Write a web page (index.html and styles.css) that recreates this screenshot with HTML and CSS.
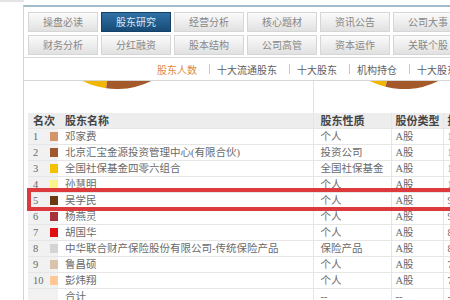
FILE: index.html
```html
<!DOCTYPE html>
<html lang="zh-CN">
<head>
    <meta charset="UTF-8">
    <title>股东研究</title>
    <link rel="stylesheet" href="styles.css">
</head>
<body>

    <div class="top-strip"></div>

    <div class="frame">
        <!-- Main tabs -->
        <div class="tabs">
            <div class="tab-row">
                <a class="tab">操盘必读</a>
                <a class="tab active">股东研究</a>
                <a class="tab">经营分析</a>
                <a class="tab">核心题材</a>
                <a class="tab">资讯公告</a>
                <a class="tab">公司大事</a>
            </div>
            <div class="tab-row">
                <a class="tab">财务分析</a>
                <a class="tab">分红融资</a>
                <a class="tab">股本结构</a>
                <a class="tab">公司高管</a>
                <a class="tab">资本运作</a>
                <a class="tab">关联个股</a>
            </div>
        </div>

        <div class="panel">
            <!-- Sub navigation -->
            <div class="subnav">
                <a class="current">股东人数</a>
                <span class="sep"></span>
                <a>十大流通股东</a>
                <span class="sep"></span>
                <a>十大股东</a>
                <span class="sep"></span>
                <a>机构持仓</a>
                <span class="sep"></span>
                <a>十大股东变动</a>
            </div>

            <!-- Pie charts (only the bottom is visible) -->
            <div class="charts">
                <div class="chart-half left">
                    <svg class="pie" width="72" height="8" viewBox="0 0 72 8">
                        <path d="M1.6 0 A78 78 0 0 0 25.1 7.2 L26.1 0 Z" fill="#f2b705"/>
                        <path d="M26.1 0 L25.1 7.2 A78 78 0 0 0 70.4 0 Z" fill="#a3592a"/>
                    </svg>
                </div>
                <div class="chart-half right">
                    <svg class="pie" width="72" height="8" viewBox="0 0 72 8">
                        <path d="M1.6 0 A78 78 0 0 0 17.5 5.8 L18.9 0 Z" fill="#f2b705"/>
                        <path d="M18.9 0 L17.5 5.8 A78 78 0 0 0 70.4 0 Z" fill="#a3592a"/>
                    </svg>
                </div>
            </div>

            <!-- Holder table -->
            <div class="table-wrap">
                <table class="holders">
                    <colgroup>
                        <col style="width:17px">
                        <col style="width:13px">
                        <col style="width:255px">
                        <col style="width:78px">
                        <col style="width:52px">
                        <col style="width:87px">
                    </colgroup>
                    <thead>
                        <tr>
                            <th colspan="2" class="c-rank">名次</th>
                            <th class="c-name">股东名称</th>
                            <th class="c-kind">股东性质</th>
                            <th class="c-type">股份类型</th>
                            <th class="c-num">持股数(股)</th>
                        </tr>
                    </thead>
                    <tbody id="holderRows"></tbody>
                </table>
                <div class="highlight"></div>
            </div>
        </div>
    </div>

    <script>
        // Top ten holders
        const holders = [
            ["邓家费", "个人", "#d4956a", "1,806,200"],
            ["北京汇宝金源投资管理中心(有限合伙)", "投资公司", "#a0582e", "1,536,000"],
            ["全国社保基金四零六组合", "全国社保基金", "#f2c200", "1,200,000"],
            ["孙慧明", "个人", "#fbf58a", "1,080,000"],
            ["吴学民", "个人", "#6b3a12", "960,000"],
            ["杨燕灵", "个人", "#a8323a", "900,000"],
            ["胡国华", "个人", "#e01010", "870,000"],
            ["中华联合财产保险股份有限公司-传统保险产品", "保险产品", "#d4d4d4", "800,000"],
            ["鲁昌硕", "个人", "#d9c3aa", "750,000"],
            ["彭炜翔", "个人", "#ffc896", "700,000"]
        ];

        let html = "";
        holders.forEach(function (h, i) {
            html += '<tr>' +
                '<td class="c-rank">' + (i + 1) + '</td>' +
                '<td class="c-color"><span class="swatch" style="background:' + h[2] + '"></span></td>' +
                '<td class="c-name">' + h[0] + '</td>' +
                '<td class="c-kind">' + h[1] + '</td>' +
                '<td class="c-type">A股</td>' +
                '<td class="c-num">' + h[3] + '</td>' +
                '</tr>';
        });
        html += '<tr><td class="c-rank"></td><td class="c-color"></td>' +
            '<td class="c-name">合计</td><td class="c-kind">--</td><td class="c-type">--</td><td class="c-num">--</td></tr>';
        document.getElementById("holderRows").innerHTML = html;
    </script>

</body>
</html>
```

FILE: styles.css
```css
body {
    margin: 0;
    padding: 0;
    background-color: #ffffff;
    font-family: "Noto Sans CJK SC", sans-serif;
    overflow: hidden;
}

.top-strip {
    width: 24px;
    height: 2px;
    background-color: #e4e4e4;
}

.frame {
    margin: 3px 0 0 23px;
    width: 540px;
    border-top: 2px solid #a3bccc;
    border-left: 1px solid #cbd5dc;
}

/* Tabs */
.tabs {
    display: flex;
    flex-direction: column;
    gap: 3px;
    padding: 5px 0 2px 4px;
}

.tab-row {
    display: flex;
    gap: 3px;
}

.tab {
    box-sizing: border-box;
    width: 70px;
    height: 20px;
    line-height: 18px;
    text-align: center;
    font-size: 10px;
    color: #888888;
    background: linear-gradient(#fbfbfb, #e1e1e1);
    border: 1px solid #d6d6d6;
}

.tab.active {
    color: #dce8f3;
    background: linear-gradient(#2f71a5, #184b77);
    border-color: #143f66;
}

/* Panel */
.panel {
    border-top: 1px solid #dadada;
}

.subnav {
    display: flex;
    align-items: center;
    height: 22px;
    padding-left: 133px;
    border-bottom: 1px solid #d6d6d6;
    font-size: 10px;
    color: #5e5e5e;
    white-space: nowrap;
}

.subnav .current {
    color: #e08a3e;
}

.subnav .sep {
    width: 1px;
    height: 10px;
    background-color: #c8c8c8;
    margin: 0 7px 0 12px;
}

.charts {
    display: flex;
    height: 32px;
}

.chart-half.left {
    width: 289px;
    border-right: 1px solid #e2e2e2;
}

.pie {
    display: block;
}

.chart-half.left .pie {
    margin-left: 57px;
}

.chart-half.right .pie {
    margin-left: 54px;
}

/* Table */
.table-wrap {
    position: relative;
    margin-left: 4px;
}

.holders {
    border-collapse: collapse;
    table-layout: fixed;
    width: 502px;
    font-size: 10.5px;
    color: #6a6a6a;
    font-family: "Liberation Serif", "Noto Sans CJK SC", serif;
}

.holders th,
.holders td {
    height: 15px;
    line-height: 15px;
    padding: 0;
    text-align: left;
    white-space: nowrap;
    overflow: hidden;
    border-bottom: 1px solid #e6e6e6;
}

.holders th {
    background-color: #ededed;
    color: #444444;
    font-size: 11px;
    font-weight: bold;
    font-family: "Noto Sans CJK SC", sans-serif;
}

.holders td.c-rank,
.holders td.c-color {
    background-color: #f1f1f1;
}

.holders .c-rank {
    padding-left: 5px;
}

.holders .c-color {
    padding-left: 5px;
}

.holders .c-name {
    padding-left: 7px;
}

.holders .c-kind {
    padding-left: 7px;
    border-left: 1px solid #e6e6e6;
}

.holders .c-type {
    padding-left: 4px;
    border-left: 1px solid #e6e6e6;
}

.holders .c-num {
    padding-left: 4px;
    border-left: 1px solid #e6e6e6;
}

.swatch {
    display: inline-block;
    width: 8px;
    height: 9px;
    vertical-align: -1px;
}

/* Red marker drawn over row 5 */
.highlight {
    position: absolute;
    left: -1px;
    top: 75px;
    width: 490px;
    height: 23px;
    box-sizing: border-box;
    border: 4px solid #dc3a3c;
}
```
